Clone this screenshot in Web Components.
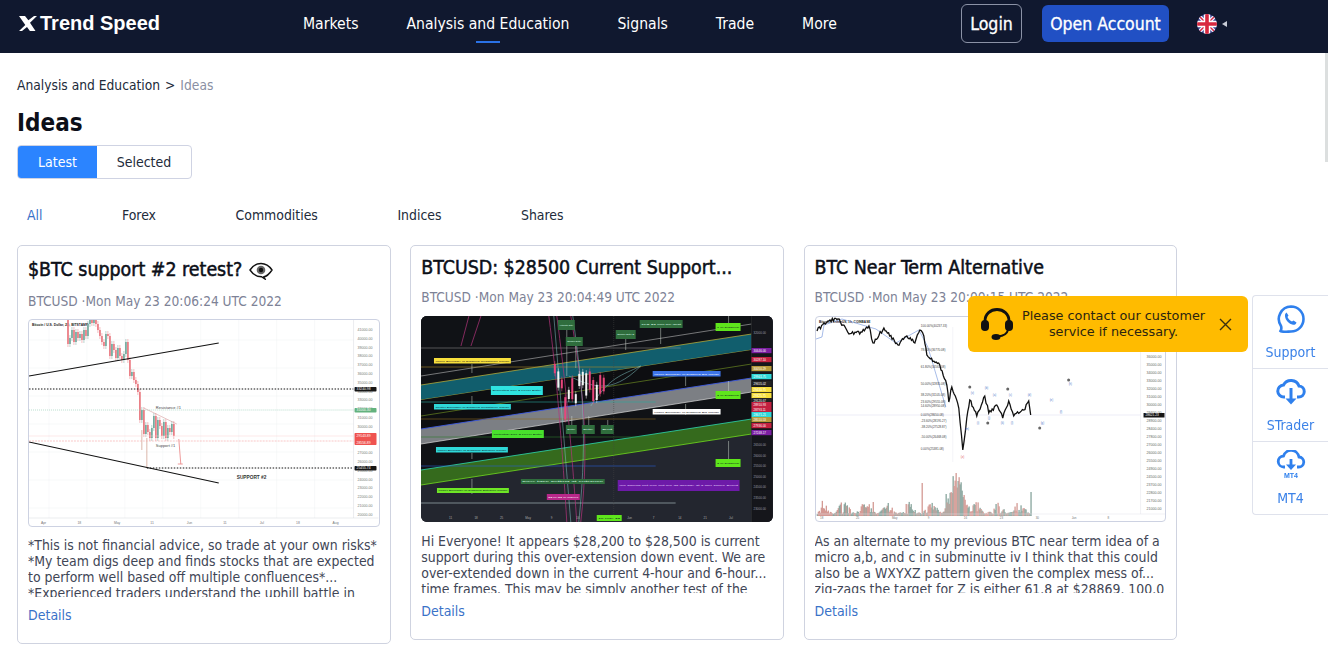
<!DOCTYPE html>
<html lang="en">
<head>
<meta charset="utf-8">
<title>Ideas</title>
<style>
  html, body { margin: 0; padding: 0; height: 100%; overflow: hidden; background: #fff; }
  body { font-family: "DejaVu Sans", Verdana, sans-serif; font-stretch: condensed; color: #1a1f2e; }
</style>
</head>
<body>
<trend-header></trend-header>
<ideas-page>
  <idea-card tall>
    <span slot="title">$BTC support #2 retest? <eye-emoji></eye-emoji></span>
    <span slot="meta">BTCUSD ·Mon May 23 20:06:24 UTC 2022</span>
    <chart-support slot="chart"></chart-support>
    <span slot="text">*This is not financial advice, so trade at your own risks* *My team digs deep and finds stocks that are expected to perform well based off multiple confluences*... *Experienced traders understand the uphill battle in</span>
  </idea-card>
  <idea-card>
    <span slot="title">BTCUSD: $28500 Current Support...</span>
    <span slot="meta">BTCUSD ·Mon May 23 20:04:49 UTC 2022</span>
    <chart-channels slot="chart"></chart-channels>
    <span slot="text">Hi Everyone! It appears $28,200 to $28,500 is current support during this over-extension down event. We are over-extended down in the current 4-hour and 6-hour... time frames. This may be simply another test of the</span>
  </idea-card>
  <idea-card>
    <span slot="title">BTC Near Term Alternative</span>
    <span slot="meta">BTCUSD ·Mon May 23 20:00:15 UTC 2022</span>
    <chart-waves slot="chart"></chart-waves>
    <span slot="text">As an alternate to my previous BTC near term idea of a micro a,b, and c in subminutte iv I think that this could also be a WXYXZ pattern given the complex mess of... zig-zags the target for Z is either 61.8 at $28869. 100.0</span>
  </idea-card>
</ideas-page>
<contact-toast></contact-toast>
<side-rail></side-rail>
<div style="position:fixed;right:0;top:53px;width:3px;height:109px;background:#dcdfdf"></div>

<script>
// seeded numbers so the charts come out the same on every load
function makeRand(seed) {
  let s = seed;
  return () => { s = (s * 16807) % 2147483647; return s / 2147483647; };
}

function priceScale(x, y0, step, labels, fill) {
  return labels.map((t, i) =>
    `<text x="${x}" y="${y0 + i * step}" font-size="3.6" fill="${fill}">${t}</text>`).join('');
}

class TrendHeader extends HTMLElement {
  constructor() {
    super();
    this.attachShadow({ mode: 'open' });
  }
  connectedCallback() {
    const links = ['Markets', 'Analysis and Education', 'Signals', 'Trade', 'More'];
    this.shadowRoot.innerHTML = `
      <style>
        :host {
          display: flex;
          align-items: center;
          height: 53px;
          background: #10182f;
          color: #fff;
          padding: 0 0 6px 19px;
          box-sizing: border-box;
        }
        .logo { display: flex; align-items: center; width: 284px; flex: none; font: 700 20px "Liberation Sans", Arial, sans-serif; }
        .logo svg { width: 19px; height: 15px; margin-right: 2px; }
        nav { display: flex; gap: 48px; flex: none; width: 658px; }
        nav a { position: relative; font-size: 15.6px; line-height: 24px; }
        nav a.on::after {
          content: ''; position: absolute; left: 50%; margin-left: -12px; bottom: -7px;
          width: 24px; height: 2px; background: #2a72e8;
        }
        .login {
          box-sizing: border-box; width: 61px; height: 39px; border: 1px solid #8b92a6; border-radius: 6px;
          display: flex; align-items: center; justify-content: center; font-size: 17.6px; -webkit-text-stroke: .3px #fff; margin-right: 20px;
        }
        .open {
          width: 127px; height: 37px; background: #2150c4; border-radius: 6px;
          display: flex; align-items: center; justify-content: center; font-size: 17.5px; -webkit-text-stroke: .3px #fff; margin-right: 28px;
        }
        .flag { width: 20px; height: 20px; }
        .caret { width: 0; height: 0; border: 3.5px solid transparent; border-right: 5px solid #c8ccd6; border-left: 0; margin-left: 5px; }
      </style>
      <div class="logo">
        <svg viewBox="0 0 19 15"><path fill="#fff" d="M0 0h6l3.400 4.300L15 0h3l-7 6.800L16.500 15h-5.600L8 11 3 15H0l6.300-6z"/></svg>
        <span>Trend Speed</span>
      </div>
      <nav>${links.map(l => `<a class="${l.startsWith('Analysis') ? 'on' : ''}">${l}</a>`).join('')}</nav>
      <div class="login">Login</div>
      <div class="open">Open Account</div>
      <svg class="flag" viewBox="0 0 20 20">
        <defs><clipPath id="c"><circle cx="10" cy="10" r="10"/></clipPath></defs>
        <g clip-path="url(#c)">
          <rect width="20" height="20" fill="#39408f"/>
          <path d="M0 0l20 20M20 0L0 20" stroke="#eef" stroke-width="4"/>
          <path d="M0 0l20 20M20 0L0 20" stroke="#d8283f" stroke-width="1.400"/>
          <path d="M10 0v20M0 10h20" stroke="#fff" stroke-width="6.500"/>
          <path d="M10 0v20M0 10h20" stroke="#d8283f" stroke-width="3.600"/>
        </g>
      </svg>
      <span class="caret"></span>
    `;
  }
}

class IdeasPage extends HTMLElement {
  constructor() {
    super();
    this.attachShadow({ mode: 'open' });
  }
  connectedCallback() {
    const filters = ['All', 'Forex', 'Commodities', 'Indices', 'Shares'];
    this.shadowRoot.innerHTML = `
      <style>
        :host { display: block; padding: 23px 0 0 17px; }
        .crumb { font-size: 13.7px; line-height: 18px; color: #222b3a; display: flex; gap: 5px; }
        .crumb i { font-style: normal; color: #8a8fa3; }
        h1 { margin: 12px 0 0; font-size: 24px; line-height: 34px; font-weight: 600; color: #0c0f18; }
        .tabs {
          display: flex; width: 175px; height: 34px; margin-top: 5px; box-sizing: border-box;
          border: 1px solid #cfd3e3; border-radius: 4px; font-size: 14px; overflow: hidden;
        }
        .tabs div { display: flex; align-items: center; justify-content: center; }
        .tabs .on { width: 79px; background: #2b84ff; color: #fff; }
        .tabs .off { flex: 1; color: #222b3a; }
        .filters { display: flex; gap: 79.5px; margin: 27px 0 0; padding-left: 10px; font-size: 13.9px; line-height: 18px; color: #222b3a; }
        .filters .on { color: #3a72c8; }
        .cards { display: flex; align-items: flex-start; gap: 19.75px; margin-top: 21px; }
      </style>
      <div class="crumb"><span>Analysis and Education</span><span>&gt;</span><i>Ideas</i></div>
      <h1>Ideas</h1>
      <div class="tabs"><div class="on">Latest</div><div class="off">Selected</div></div>
      <div class="filters">${filters.map((f, i) => `<span class="${i ? '' : 'on'}">${f}</span>`).join('')}</div>
      <div class="cards"><slot></slot></div>
    `;
  }
}

class IdeaCard extends HTMLElement {
  constructor() {
    super();
    this.attachShadow({ mode: 'open' });
  }
  connectedCallback() {
    this.shadowRoot.innerHTML = `
      <style>
        :host {
          display: block; flex: none; box-sizing: border-box; width: 373.5px;
          border: 1px solid #cfd3e0; border-radius: 5px; padding: 9px 10px 18px; background: #fff;
        }
        .title {
          display: block; font-size: 19.4px; line-height: 26px; color: #0c0f18; white-space: nowrap;
          -webkit-text-stroke: .5px #0c0f18;
        }
        :host([tall]) .title { line-height: 30px; }
        .meta { display: block; margin-top: 6px; font-size: 13.6px; line-height: 20px; color: #7d8296; white-space: nowrap; }
        .chart { display: block; margin-top: 9px; }
        :host([tall]) .chart { margin-top: 8px; }
        .text {
          display: block; margin-top: 11px; height: 60px; overflow: hidden;
          font-size: 13.9px; line-height: 16px; color: #3f4656;
        }
        :host([tall]) .text { margin-top: 10px; }
        .more { display: block; margin-top: 8px; font-size: 14px; line-height: 20px; color: #3a72c8; }
      </style>
      <div class="title"><slot name="title"></slot></div>
      <div class="meta"><slot name="meta"></slot></div>
      <div class="chart"><slot name="chart"></slot></div>
      <div class="text"><slot name="text"></slot></div>
      <span class="more">Details</span>
    `;
  }
}

class EyeEmoji extends HTMLElement {
  constructor() {
    super();
    this.attachShadow({ mode: 'open' }).innerHTML = `
      <style>:host { display: inline-block; width: 24px; height: 18px; vertical-align: -4px; margin-left: 1px; -webkit-text-stroke: 0; }</style>
      <svg width="24" height="18" viewBox="0 0 24 18">
        <path d="M1 8c3-4.500 7-6.500 11-6.500S20 3.500 23 8c-3 4.500-6 6.500-8 6.700l1 2.300-3.500-2.300C8 14.700 4 12.500 1 8z" fill="#fff" stroke="#111" stroke-width="1.400"/>
        <circle cx="12" cy="8" r="4.300" fill="#666"/><circle cx="12" cy="8" r="2.200" fill="#111"/>
      </svg>`;
  }
}

class ChartSupport extends HTMLElement {
  constructor() {
    super();
    this.attachShadow({ mode: 'open' });
  }
  connectedCallback() {
    // x, open, close
    const closes = [[39,-2,24],[41,24,18],[43,18,10],[45,10,22],[47,22,12],[49,12,18],[51,18,14],[53,14,20],[55,20,10],[57,10,16],[59,16,4],[61,4,-2],[63,-2,3],[65,3,-4],[67,-4,4],[69,4,10],[71,10,16],[73,16,22],[75,22,26],[77,26,14],[79,14,16],[81,16,36],[83,36,24],[85,24,30],[87,30,38],[89,38,28],[91,28,36],[93,36,40],[95,40,34],[97,34,22],[99,22,40],[101,40,56],[103,56,52],[105,52,60],[107,60,64],[109,64,72],[111,72,100],[113,100,90],[115,90,114],[117,114,105],[119,105,112],[121,112,118],[123,118,108],[125,108,96],[127,96,118],[129,118,100],[131,100,106],[133,106,116],[135,116,102],[137,102,118],[139,118,108],[141,108,112],[143,112,104],[145,104,116]];
    const candles = closes.map(([x, o, c]) => {
      const col = c > o ? '#ea7c84' : '#74ab9f';
      const t = Math.min(o, c), h = Math.abs(c - o);
      return `<path d="M${x} ${t - 3}v${h + 6}" stroke="${col}" stroke-width=".5"/><rect x="${x - .8}" y="${t}" width="1.700" height="${h}" fill="${col}"/>`;
    }).join('');
    const labels = ['41000.00','40000.00','39000.00','38000.00','37000.00','36000.00','35000.00','34000.00','33000.00','32000.00','31000.00','30000.00','29000.00','28000.00','27000.00','26000.00','25000.00','24000.00','23000.00','22000.00','21000.00','20000.00'];
    this.shadowRoot.innerHTML = `
      <style>
        :host { display: block; height: 208px; box-sizing: border-box; border: 1px solid #cdd2e2; border-radius: 4px; overflow: hidden; background: #fff; }
        svg { display: block; width: 100%; height: 100%; }
      </style>
      <svg viewBox="0 0 350 206" preserveAspectRatio="none" font-family="Liberation Sans, sans-serif">
        <g stroke="#f1f2f5" stroke-width=".5">
          ${[20,58,96,134,172,210,248,286].map(x => `<path d="M${x} 0v198"/>`).join('')}
          ${[20,48,76,104,132,160,188].map(y => `<path d="M0 ${y}h325"/>`).join('')}
        </g>
        <text x="3" y="6" font-size="3.400" font-weight="700" fill="#222">Bitcoin / U.S. Dollar, 2D, BITSTAMP</text>
        ${candles}
        <path d="M115 88l33 16" stroke="#c88" stroke-width=".5"/>
        <path d="M118 118v30M113 110v20" stroke="#c98" stroke-width=".7"/>
        <path d="M150 119l2 25M149 144h5" stroke="#ea8080" stroke-width=".8" fill="none"/>
        <path d="M0 56L190 23" stroke="#111" stroke-width="1.200"/>
        <path d="M0 122L190 163" stroke="#111" stroke-width="1.200"/>
        <path d="M0 69H325" stroke="#111" stroke-width="1" stroke-dasharray="1.500 1.500"/>
        <path d="M0 90H325" stroke="#8cc7ae" stroke-width=".6" stroke-dasharray="1 1"/>
        <path d="M0 121H325" stroke="#f5a3a3" stroke-width=".6" stroke-dasharray="2 1"/>
        <path d="M0 116H325" stroke="#fad4d4" stroke-width=".5"/>
        <path d="M118 148H325" stroke="#111" stroke-width="1" stroke-dasharray="1.500 1.500"/>
        <text x="127" y="89" font-size="4" fill="#444">Resistance #1</text>
        <text x="127" y="127" font-size="4" fill="#444">Support #1</text>
        <text x="208" y="159.500" font-size="4.800" font-weight="700" fill="#333">SUPPORT #2</text>
        <path d="M325 0V198M0 198H350" stroke="#d8dae0" stroke-width=".5"/>
        ${priceScale(329, 11, 8.800, labels, '#777')}
        <rect x="326" y="67" width="22" height="4.500" rx=".8" fill="#161616"/><text x="328" y="70.400" font-size="3.400" fill="#fff">33240.98</text>
        <rect x="326" y="88" width="22" height="4.500" rx=".8" fill="#63b27e"/><text x="328" y="91.400" font-size="3.400" fill="#fff">31000.30</text>
        <rect x="326" y="113" width="22" height="12" rx=".8" fill="#ef5350"/><text x="328" y="117" font-size="3.400" fill="#fff">29143.89</text><text x="328" y="123.600" font-size="3.400" fill="#fff">28556.89</text>
        <rect x="326" y="146" width="22" height="4.500" rx=".8" fill="#161616"/><text x="328" y="149.400" font-size="3.400" fill="#fff">25455.74</text>
        ${['Apr','18','May','11','Jun','11','Jul','18','Aug'].map((t, i) => `<text x="${12 + i * 36.500}" y="204" font-size="3.400" fill="#777">${t}</text>`).join('')}
      </svg>`;
  }
}

class ChartChannels extends HTMLElement {
  constructor() {
    super();
    this.attachShadow({ mode: 'open' });
  }
  connectedCallback() {
    const rand = makeRand(31);
    // label boxes: x, y, w, h, fill, text colour, text
    const tags = [
      [13,42,77,5.500,'#f7df3c','#222','Upper Boundary of Diagonal Resistance Range'],
      [70,70,52,9,'#2fe3e0','#123','Expected Tier 2 Level Entry'],
      [13,88,77,5.500,'#2fd8d8','#123','Center Boundary of Diagonal Resistance Range'],
      [71,114,52,8,'#48e02c','#122','Potential Tier 3 Level Entry'],
      [15,131,72,5.500,'#2fd8d8','#123','Upper Boundary of Diagonal Entrance Range'],
      [16,172,72,5,'#6fe626','#122','Lower Boundary of Diagonal Entrance Range'],
      [232,55,68,5.500,'#3d74e8','#fff','Upper Boundary of Diagonal Bid Range'],
      [232,93,68,5.500,'#fff','#111','Lower Boundary of Diagonal Bid Range'],
      [295,7,25,8,'#5fe61c','#122','1 W Diagonal'],
      [295,75,25,8,'#5fe61c','#122','2 W Diagonal'],
      [295,143,25,8,'#5fe61c','#122','3 W Diagonal'],
      [137,4,17,10,'#2f6d3d','#dfe','Automatic Entry'],
      [145,21,17,9,'#2f6d3d','#dfe','Sample Entry'],
      [195,14,20,9,'#2f6d3d','#dfe','Sample Entry B'],
      [219,4,43,8,'#2f6d3d','#dfe','TLS 23 000 Re-Test'],
      [145,109,11,9,'#2f6d3d','#dfe','Entry'],
      [161,109,13,9,'#2f6d3d','#dfe','Entry'],
      [180,109,13,9,'#2f6d3d','#dfe','Exit'],
      [100,163,84,5,'#2f6d3d','#dfe','50% take setting at entrance'],
      [126,178,33,6,'#b8288a','#fff','$24K-$3 in Wave?'],
      [197,164,122,11,'#6d1aa8','#e9d6ff','We should not rule out me as already at a Tier Three Event'],
      [176,199,25,6,'#5fe61c','#122','18 May 22']
    ];
    const tagSvg = tags.map(([x, y, w, h, bg, fg, t]) =>
      `<rect x="${x}" y="${y}" width="${w}" height="${h}" fill="${bg}"/><text x="${x + w / 2}" y="${y + h / 2 + 1}" font-size="2.400" text-anchor="middle" fill="${fg}" textLength="${w - 3}" lengthAdjust="spacingAndGlyphs">${t}</text>`).join('');
    // short pointer lines hanging off the labels
    const pointers = [[51,48,57],[51,93,80],[51,137,143],[51,178,163],[265,60,70],[265,99,88],[308,0,7],[308,65,75],[308,125,143],[205,23,34],[240,12,28],[146,14,60],[155,30,52],[151,118,100],[168,118,100],[187,118,104]];
    const pointerSvg = pointers.map(([x, a, b]) => `<path d="M${x} ${a}V${b}" stroke="#cfd8cf" stroke-width=".5"/>`).join('');
    let candles = '';
    for (let i = 0; i < 15; i++) {
      const x = 134 + i * 3.500;
      const y = 48 + rand() * 34;
      const h = 8 + rand() * 16;
      const col = rand() > .5 ? '#f4f4f4' : '#e8467c';
      candles += `<path d="M${x} ${y - 3}v${h + 6}" stroke="${col}" stroke-width=".5"/><rect x="${x - 1}" y="${y}" width="2" height="${h}" fill="${col}"/>`;
    }
    const rightTags = [[32,'#7c1fa3','30646.00'],[41,'#c3203f','30287.10'],[50,'#b79a3a','30050.29'],[58,'#2fd8d8','29941.75'],[65,'#222','29655.02'],[71,'#f7df3c','29430.75'],[77,'#f7df3c','29325.75'],[82,'#222','29120.67'],[86,'#c3203f','28910.93'],[91,'#c3203f','28793.11'],[96,'#2fd8d8','28671.21'],[101,'#b79a3a','28510.53'],[107,'#c3203f','27936.00'],[114,'#7c1fa3','27248.17']];
    const rightSvg = rightTags.map(([y, bg, t]) =>
      `<rect x="331" y="${y}" width="20" height="5.200" fill="${bg}"/><text x="333" y="${y + 3.800}" font-size="3" fill="#fff">${t}</text>`).join('');
    const scale = [[18,'32000.00'],[130,'26500.00'],[141,'26000.00'],[151,'25500.00'],[162,'25000.00'],[172,'24500.00'],[183,'23500.00'],[194,'23000.00']];
    const scaleSvg = scale.map(([y, t]) => `<text x="333" y="${y}" font-size="3" fill="#9a9ca5">${t}</text>`).join('');
    // the date label sits where the "23" tick would be
    const ticks = ['11','18','25','May','9','16','','Jun','7','14','21','Jul'];
    this.shadowRoot.innerHTML = `
      <style>
        :host { display: block; height: 206px; border-radius: 6px; overflow: hidden; background: #1c1d24; }
        svg { display: block; width: 100%; height: 100%; }
      </style>
      <svg viewBox="0 0 352 206" preserveAspectRatio="none" font-family="Liberation Sans, sans-serif">
        <rect width="352" height="206" fill="#23262f"/>
        <path d="M0 0H331V118L0 169Z" fill="#101216"/>
        <path d="M0 69L331 18V34L0 84Z" fill="#115e6d"/>
        <path d="M0 69L331 18M0 84L331 34" stroke="#c9b93a" stroke-width=".7"/>
        <path d="M0 84L331 34V62L0 113Z" fill="#0d0e11"/>
        <path d="M0 113L331 62V76L0 128Z" fill="#7c7f84"/>
        <path d="M0 113L331 62" stroke="#3d5ae0" stroke-width=".9"/>
        <path d="M0 128L331 76" stroke="#ddd" stroke-width=".7"/>
        <path d="M0 154L331 103V118L0 169Z" fill="#356a1d"/>
        <path d="M0 154L331 103" stroke="#2fd8b0" stroke-width=".8"/>
        <path d="M0 169L331 118" stroke="#74e020" stroke-width=".8"/>
        <path d="M0 60L331 8" stroke="#bbb" stroke-width=".6"/>
        <path d="M0 100L331 48" stroke="#8fb828" stroke-width=".5"/>
        <path d="M0 32H260" stroke="#999" stroke-width=".5"/>
        <path d="M0 51H220" stroke="#a8862a" stroke-width=".6"/>
        <path d="M0 86H235" stroke="#2aa7a0" stroke-width=".6"/>
        <path d="M0 103H235" stroke="#8a6a22" stroke-width=".6"/>
        <path d="M0 121H235" stroke="#2c7a2e" stroke-width=".6"/>
        <path d="M0 150H235" stroke="#2a5fd0" stroke-width=".6"/>
        <path d="M0 187H255" stroke="#bcc" stroke-width=".6"/>
        <path d="M128 0C136 60 142 140 146 206M136 0C144 60 150 120 156 206M160 206C170 120 160 60 150 0M40 30L48 0M50 30L60 0" stroke="#b5357c" stroke-width=".7" fill="none"/>
        <path d="M133 0L150 206M148 60C170 70 190 80 220 50M170 90C190 60 200 60 220 50M152 0C160 60 168 110 158 206" stroke="#8cc" stroke-width=".5" fill="none"/>
        ${candles}
        <path d="M193 0V206" stroke="#444" stroke-width=".5" stroke-dasharray="1 1"/>
        ${pointerSvg}
        ${tagSvg}
        <rect x="331" width="21" height="206" fill="#15161b"/>
        <path d="M331 0V206" stroke="#333" stroke-width=".5"/>
        ${scaleSvg}
        ${rightSvg}
        ${ticks.map((t, i) => t ? `<text x="${28 + i * 25.500}" y="203" font-size="3" fill="#aaa">${t}</text>` : '').join('')}
      </svg>`;
  }
}

class ChartWaves extends HTMLElement {
  constructor() {
    super();
    this.attachShadow({ mode: 'open' });
  }
  connectedCallback() {
    const rand = makeRand(123);
    // anchor points of the price line, filled in with noise
    const anchors = [[1,14],[8,6],[14,3],[22,2],[27,8],[33,17],[45,15],[53,9],[57,26],[68,11],[82,28],[91,19],[99,26],[104,13],[108,19],[111,38],[124,48],[131,68],[133,85],[136,70],[143,91],[147,133],[151,101],[154,83],[161,99],[169,79],[173,96],[181,88],[187,101],[193,84],[198,99],[208,93],[213,84],[215,98]];
    let d = `M${anchors[0][0]} ${anchors[0][1]}`;
    anchors.slice(1).forEach(([x, y], i) => {
      const [px, py] = anchors[i];
      const steps = Math.max(2, Math.round((x - px) / 1.200));
      for (let t = 1; t <= steps; t++) {
        const nx = px + (x - px) * t / steps, ny = py + (y - py) * t / steps + (t < steps ? (rand() - .5) * 4 : 0);
        d += `L${nx.toFixed(1)} ${ny.toFixed(1)}`;
      }
    });
    // volume: a noisy base, a big burst at the crash and a few lone spikes
    const lone = { 106: 33, 118: 10, 130: 22, 215: 24, 90: 12, 57: 14, 180: 12 };
    let bars = '';
    for (let x = 1; x <= 215; x += 1) {
      const spike = Math.exp(-Math.pow((x - 141) / 8, 2)) * 36;
      let h = 2 + rand() * 6 * (1.200 + Math.sin(x / 3.500)) + spike * (.5 + rand() * .7);
      if (lone[x]) h = lone[x];
      const col = rand() > .5 ? '#cf8f88' : '#7c9c93';
      bars += `<rect x="${x - .3}" y="${199 - h}" width="1.300" height="${h}" fill="${col}"/>`;
    }
    const fibs = [[9,'100.00%(40237.33)'],[33,'78.60%(36770.08)'],[50,'61.80%(34561.08)'],[67,'50.00%(32835.08)'],[78,'38.20%(31105.08)'],[85,'23.60%(29555.08)'],[89,'14.60%(28950.08)'],[98,'0.00%(28650.08)'],[104,'-23.60%(28195.27)'],[110,'-38.20%(27528.87)'],[120,'-50.00%(26468.08)'],[132,'0.00%(25381.08)']];
    const fibSvg = fibs.map(([y, t]) => `<text x="105" y="${y + 1}" font-size="3" fill="#444">${t}</text>`).join('');
    const scale = ['36000.00','35000.00','34000.00','33000.00','32000.00','31000.00','30000.00','29400.00','28900.00','28400.00','27800.00','27000.00','26000.00','25500.00','24900.00','24500.00','23700.00','22800.00','21700.00','21000.00'];
    const waveLabels = [[155,77,'(v)'],[169,72,'(b)'],[177,79,'(a)'],[193,79,'(c)'],[212,79,'(d)'],[234,84,'(e)'],[244,96,'(f)'],[225,107,'(g)'],[253,68,'(h)'],[161,107,'(i)'],[172,102,'(j)'],[185,107,'(k)'],[195,107,'(l)'],[149,113,'(m)']];
    const dots = [[154,70],[192,72],[172,106],[224,111],[253,63]];
    this.shadowRoot.innerHTML = `
      <style>
        :host { display: block; height: 206px; box-sizing: border-box; border: 1px solid #cdd2e2; border-radius: 4px; overflow: hidden; background: #fff; }
        svg { display: block; width: 100%; height: 100%; }
      </style>
      <svg viewBox="0 0 350 204" preserveAspectRatio="none" font-family="Liberation Sans, sans-serif">
        <text x="3" y="6" font-size="3.200" font-weight="700" fill="#222">Bitcoin / TetherUS, 1h, COINBASE</text>
        <path d="M0 22L6 20L8 8L26 2L60 12L80 26L103 13L112 30L130 90" stroke="#6b8fd8" stroke-width=".6" fill="none"/>
        <path d="M0 98H325" stroke="#dde" stroke-width=".5"/>
        <path d="M137 10V145" stroke="#e4e4ee" stroke-width=".4"/>
        <g opacity=".9">${bars}</g>
        ${fibSvg}
        <path d="${d}" stroke="#111" stroke-width="1.300" fill="none"/>
        <text x="145" y="141" font-size="3" fill="#e05555">(z)</text>
        ${waveLabels.map(([x, y, t]) => `<text x="${x}" y="${y}" font-size="2.800" fill="#4a74c8">${t}</text>`).join('')}
        ${dots.map(([x, y]) => `<circle cx="${x}" cy="${y}" r="1.500" fill="#666"/>`).join('')}
        <path d="M325 0V197M0 197H350" stroke="#e4e5ea" stroke-width=".5"/>
        ${priceScale(331, 41, 8, scale, '#666')}
        <rect x="328" y="96" width="21" height="4.500" fill="#161616"/><text x="330" y="99.500" font-size="3.200" fill="#fff">28621.23</text>
        ${['18','25','May','9','16','23','30','Jun','8'].map((t, i) => `<text x="${4 + i * 36}" y="202" font-size="3" fill="#777">${t}</text>`).join('')}
      </svg>`;
  }
}

class ContactToast extends HTMLElement {
  constructor() {
    super();
    this.attachShadow({ mode: 'open' }).innerHTML = `
      <style>
        :host {
          position: fixed; left: 968px; top: 296px; width: 280px; height: 56px; z-index: 5;
          display: flex; align-items: center; box-sizing: border-box; padding: 0 16px 0 12px;
          background: #ffbb00; border-radius: 6px; color: #2b2410; font-size: 12.8px; line-height: 16px; font-stretch: normal;
        }
        svg.head { width: 34px; height: 34px; flex: none; }
        p { margin: 0; flex: 1; text-align: center; padding: 0 6px 0 0; }
        svg.x { width: 13px; height: 13px; flex: none; }
      </style>
      <svg class="head" viewBox="0 0 34 34">
        <path d="M5 18V14C5 7 10.500 2.500 17 2.500S29 7 29 14v4" fill="none" stroke="#111" stroke-width="2.800"/>
        <rect x="1" y="13" width="8" height="11" rx="4" fill="#111"/>
        <rect x="25" y="13" width="8" height="11" rx="4" fill="#111"/>
        <path d="M28 23c-1 4-5 6-10 6.500" fill="none" stroke="#111" stroke-width="2"/>
        <ellipse cx="16" cy="30" rx="4.500" ry="3" fill="#111"/>
      </svg>
      <p>Please contact our customer service if necessary.</p>
      <svg class="x" viewBox="0 0 13 13"><path d="M1 1l11 11M12 1L1 12" stroke="#3a3010" stroke-width="1.400"/></svg>`;
  }
}

class SideRail extends HTMLElement {
  constructor() {
    super();
    this.attachShadow({ mode: 'open' }).innerHTML = `
      <style>
        :host {
          position: fixed; left: 1252px; top: 295px; width: 76px; height: 220px; z-index: 5; box-sizing: border-box;
          display: flex; flex-direction: column; background: #fff; border: 1px solid #dfe2ec; border-right: 0; border-radius: 4px 0 0 4px;
          color: #3b82e8; font-size: 14px; font-family: "DejaVu Sans", sans-serif; font-stretch: condensed;
        }
        div { flex: 1; display: flex; flex-direction: column; align-items: center; padding-top: 8px; box-sizing: border-box; border-bottom: 1px solid #dfe2ec; }
        div:last-child { border-bottom: 0; }
        svg { width: 30px; height: 30px; margin-bottom: 10px; flex: none; }
        span { line-height: 16px; }
      </style>
      <div>
        <svg viewBox="0 0 30 30">
          <path d="M15 2.500a12.500 12.500 0 0 1 0 25c-2.500 0-9 1-10.500-.5 1-1.500 1-3.500.5-5A12.500 12.500 0 0 1 15 2.500z" fill="none" stroke="#2f80ed" stroke-width="2.600"/>
          <path d="M10.500 8.500l2 3-1 1.500c1 2 2.500 3.500 4.500 4.500l1.500-1 3 2c-.5 2-2 2.500-3.500 2.200-4-.8-7.500-4.500-8-8.500-.1-1.500.3-3 1.500-3.700z" fill="#2f80ed"/>
        </svg>
        <span>Support</span>
      </div>
      <div>
        <svg viewBox="0 0 30 30">
          <path d="M9 20H8a6 6 0 0 1-.5-12A8.500 8.500 0 0 1 23 9a5.500 5.500 0 0 1-.5 11H21" fill="none" stroke="#2f80ed" stroke-width="3"/>
          <path d="M15 11v14" stroke="#2f80ed" stroke-width="3"/><path d="M9.500 21.500H20.500L15 27.500z" fill="#2f80ed"/>
        </svg>
        <span>STrader</span>
      </div>
      <div>
        <svg viewBox="0 0 30 30">
          <path d="M9 17H8a5.500 5.500 0 0 1-.5-11A8 8 0 0 1 23 7a5 5 0 0 1-.5 10H21" fill="none" stroke="#2f80ed" stroke-width="2.800"/>
          <path d="M15 9v9" stroke="#2f80ed" stroke-width="2.800"/><path d="M10 14.500H20L15 20z" fill="#2f80ed"/>
          <text x="15" y="28" font-size="7" font-weight="700" text-anchor="middle" fill="#2f80ed" font-family="Liberation Sans, sans-serif">MT4</text>
        </svg>
        <span>MT4</span>
      </div>`;
  }
}

customElements.define('trend-header', TrendHeader);
customElements.define('ideas-page', IdeasPage);
customElements.define('idea-card', IdeaCard);
customElements.define('eye-emoji', EyeEmoji);
customElements.define('chart-support', ChartSupport);
customElements.define('chart-channels', ChartChannels);
customElements.define('chart-waves', ChartWaves);
customElements.define('contact-toast', ContactToast);
customElements.define('side-rail', SideRail);
</script>
</body>
</html>
